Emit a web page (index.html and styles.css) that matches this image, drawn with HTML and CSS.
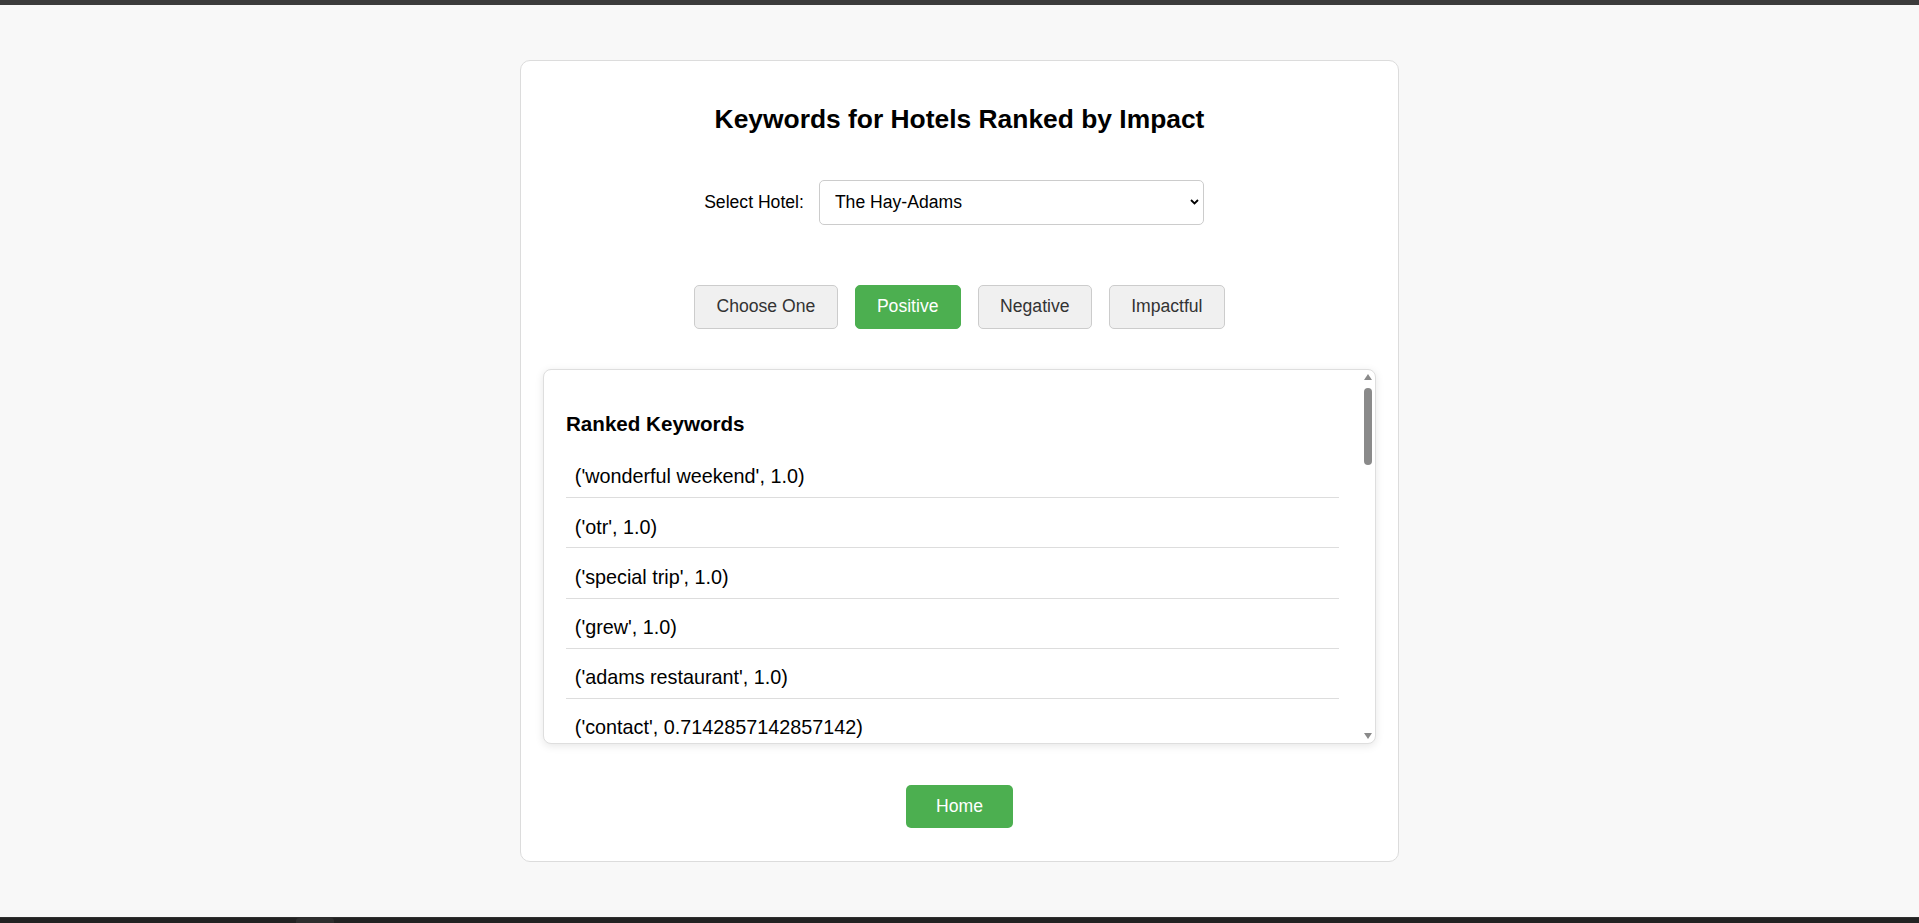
FILE: index.html
```html
<!DOCTYPE html>
<html lang="en">
<head>
<meta charset="utf-8">
<title>Keywords for Hotels Ranked by Impact</title>
<link rel="stylesheet" href="styles.css">
</head>
<body>
<div class="topbar"></div>
<main class="page">
  <section class="card">
    <h1 class="title">Keywords for Hotels Ranked by Impact</h1>
    <div class="select-row">
      <label class="select-label" for="hotel">Select Hotel:</label>
      <div class="select-wrap">
        <select id="hotel" class="hotel-select">
          <option>The Hay-Adams</option>
          <option>The Jefferson</option>
          <option>Willard InterContinental</option>
        </select>
        <svg class="chev" width="9" height="6" viewBox="0 0 9 6"><path d="M1 1 L4.5 4.5 L8 1" fill="none" stroke="#000" stroke-width="1.8"/></svg>
      </div>
    </div>
    <div class="btn-row">
      <button class="btn">Choose One</button>
      <button class="btn btn-active">Positive</button>
      <button class="btn">Negative</button>
      <button class="btn">Impactful</button>
    </div>
    <div class="list-wrap">
      <div class="list-box">
        <h3 class="list-title">Ranked Keywords</h3>
        <ul class="kw-list">
          <li>('wonderful weekend', 1.0)</li>
          <li>('otr', 1.0)</li>
          <li>('special trip', 1.0)</li>
          <li>('grew', 1.0)</li>
          <li>('adams restaurant', 1.0)</li>
          <li>('contact', 0.7142857142857142)</li>
        </ul>
      </div>
      <div class="scrollbar" aria-hidden="true">
        <div class="sb-btn"><span class="tri-up"></span></div>
        <div class="sb-track"><div class="sb-thumb"></div></div>
        <div class="sb-btn"><span class="tri-down"></span></div>
      </div>
    </div>
    <div class="home-row">
      <button class="home-btn">Home</button>
    </div>
  </section>
</main>
<div class="bottombar"><div class="bottom-tab"></div></div>
</body>
</html>
```
FILE: styles.css
```css
html, body {
  margin: 0;
  padding: 0;
}

body {
  height: 923px;
  display: flex;
  flex-direction: column;
  background: #f8f8f8;
  font-family: "Liberation Sans", Arial, sans-serif;
  color: #000;
  overflow: hidden;
}

.topbar {
  flex: none;
  height: 5px;
  background: #3c3c3c;
}

.page {
  flex: 1;
  display: flex;
  justify-content: center;
  align-items: flex-start;
  padding-top: 55px;
}

.card {
  width: 879px;
  box-sizing: border-box;
  background: #fff;
  border: 1px solid #dcdcdc;
  border-radius: 10px;
  padding: 22px 22px 33px;
}

.title {
  margin: 20.5px 0 0;
  font-size: 26.4px;
  font-weight: bold;
  text-align: center;
  color: #000;
}

.select-row {
  display: flex;
  justify-content: center;
  align-items: center;
  gap: 15px;
  margin-top: 45px;
  padding-right: 11px;
}

.select-label {
  font-size: 17.6px;
  color: #000;
}

.select-wrap {
  position: relative;
}

.hotel-select {
  appearance: none;
  -webkit-appearance: none;
  width: 385px;
  height: 45px;
  box-sizing: border-box;
  padding: 0 20px 0 15px;
  border: 1px solid #cccccc;
  border-radius: 5px;
  background: #fff;
  font-family: "Liberation Sans", Arial, sans-serif;
  font-size: 17.6px;
  color: #000;
  display: block;
}

.chev {
  position: absolute;
  right: 5px;
  top: 19px;
  pointer-events: none;
}

.btn-row {
  display: flex;
  justify-content: center;
  gap: 17px;
  margin-top: 60px;
}

.btn {
  height: 44px;
  box-sizing: border-box;
  padding: 0 21.3px;
  background: #f0f0f0;
  border: 1px solid #cccccc;
  border-radius: 5px;
  font-family: "Liberation Sans", Arial, sans-serif;
  font-size: 17.6px;
  color: #333;
}

.btn-active {
  background: #4caf50;
  border-color: #4caf50;
  color: #fff;
}

.list-wrap {
  position: relative;
  margin-top: 40px;
}

.list-box {
  height: 375px;
  box-sizing: border-box;
  border: 1px solid #dedede;
  border-radius: 8px;
  background: #fff;
  box-shadow: 0 2px 8px rgba(0, 0, 0, 0.1);
  padding: 22px 36px 0 22px;
  overflow: hidden;
}

.scrollbar {
  position: absolute;
  top: 1px;
  right: 1px;
  bottom: 1px;
  width: 14px;
  display: flex;
  flex-direction: column;
}

.sb-btn {
  flex: none;
  height: 14px;
  display: flex;
  align-items: center;
  justify-content: center;
}

.tri-up {
  width: 0;
  height: 0;
  border-left: 4.5px solid transparent;
  border-right: 4.5px solid transparent;
  border-bottom: 6px solid #8a8a8a;
}

.tri-down {
  width: 0;
  height: 0;
  border-left: 4.5px solid transparent;
  border-right: 4.5px solid transparent;
  border-top: 6px solid #8a8a8a;
}

.sb-track {
  flex: 1;
  display: flex;
  justify-content: center;
  align-items: flex-start;
}

.sb-thumb {
  margin-top: 4px;
  width: 8px;
  height: 77px;
  border-radius: 4px;
  background: #8a8a8a;
}

.list-title {
  margin: 20.5px 0 12px;
  font-size: 20.6px;
  font-weight: bold;
  color: #000;
}

.kw-list {
  list-style: none;
  margin: 0;
  padding: 0;
}

.kw-list li {
  padding: 17.4px 8.8px 8.8px;
  border-bottom: 1px solid #dddddd;
  font-size: 19.8px;
  color: #000;
}

.home-row {
  display: flex;
  justify-content: center;
  margin-top: 41px;
}

.home-btn {
  height: 43px;
  box-sizing: border-box;
  padding: 0 30.5px;
  background: #4caf50;
  border: none;
  border-radius: 5px;
  font-family: "Liberation Sans", Arial, sans-serif;
  font-size: 17.6px;
  color: #fff;
}

.bottombar {
  flex: none;
  height: 6px;
  background: #222;
  border-top: 1px solid #303030;
  box-sizing: border-box;
  display: flex;
}

.bottom-tab {
  margin-left: 296px;
  width: 38px;
  background: #2e2e2e;
  border-radius: 3px 3px 0 0;
}
```
